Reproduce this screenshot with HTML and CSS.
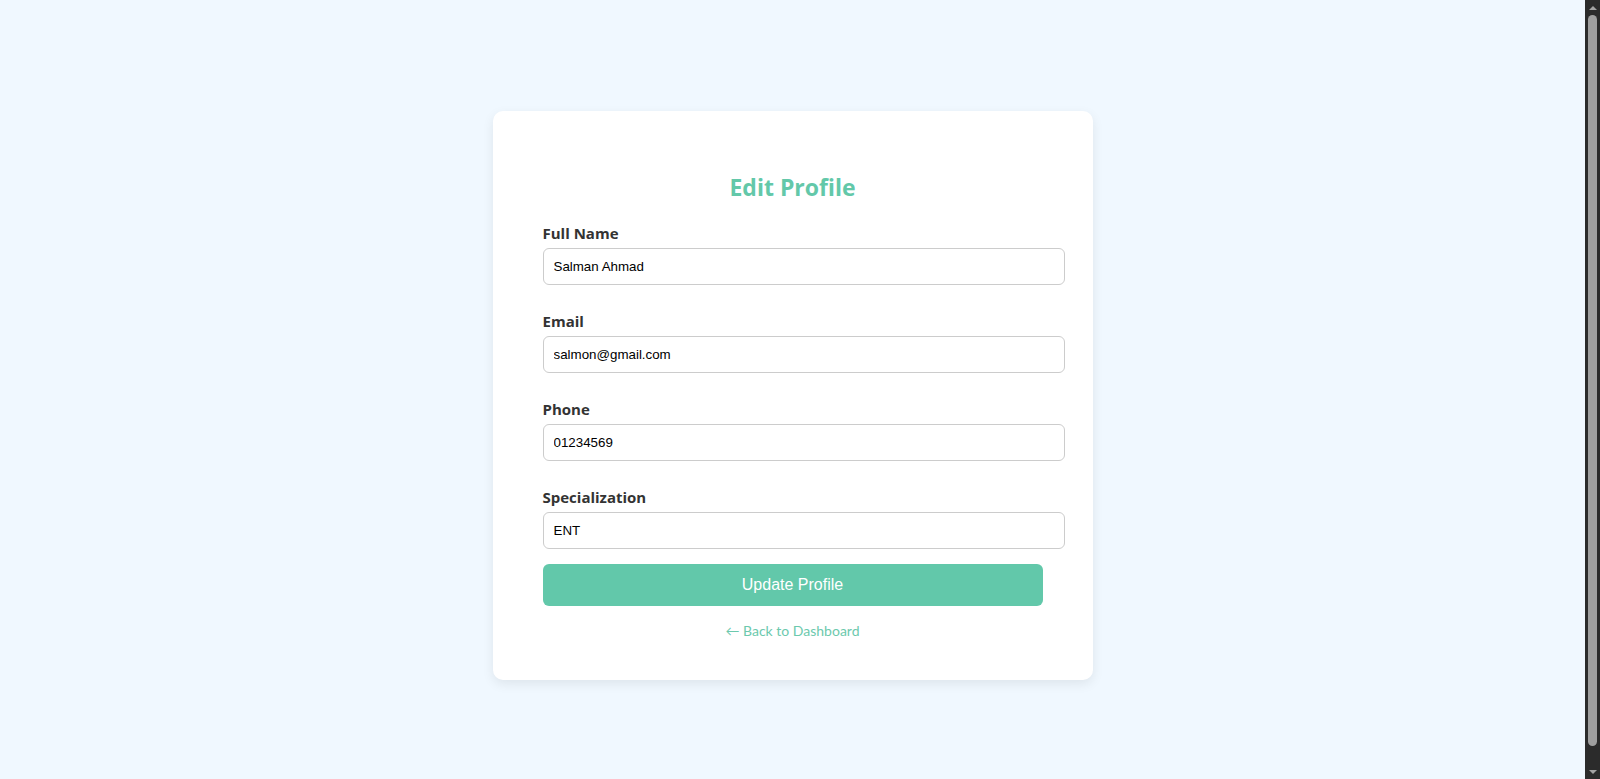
FILE: index.html
```html
<!DOCTYPE html>
<html lang="en">
<head>
<meta charset="utf-8">
<title>Edit Profile</title>
<link rel="stylesheet" href="styles.css">
</head>
<body>
<main class="page">
  <div class="card">
    <h2 class="title">Edit Profile</h2>
    <form class="form">
      <div class="field">
        <label class="label" for="name">Full Name</label>
        <input class="input" id="name" type="text" value="Salman Ahmad">
      </div>
      <div class="field">
        <label class="label" for="email">Email</label>
        <input class="input" id="email" type="email" value="salmon@gmail.com">
      </div>
      <div class="field">
        <label class="label" for="phone">Phone</label>
        <input class="input" id="phone" type="text" value="01234569">
      </div>
      <div class="field">
        <label class="label" for="spec">Specialization</label>
        <input class="input" id="spec" type="text" value="ENT">
      </div>
      <button class="btn" type="button">Update Profile</button>
    </form>
    <div class="back"><a class="back-link" href="#">&larr; Back to Dashboard</a></div>
  </div>
</main>
<div class="scrollbar" aria-hidden="true">
  <div class="sb-btn"><span class="arrow-up"></span></div>
  <div class="sb-track"><div class="sb-thumb"></div></div>
  <div class="sb-btn"><span class="arrow-down"></span></div>
</div>
</body>
</html>
```

FILE: styles.css
```css
html {
  background: #f0f8ff;
}

body {
  margin: 0;
  height: 100vh;
  overflow: hidden;
  display: flex;
  font-family: Lato, "Segoe UI", "Liberation Sans", sans-serif;
}

.page {
  flex: 1;
  display: flex;
  align-items: flex-start;
  justify-content: center;
  padding-top: 111px;
}

.card {
  width: 500px;
  padding: 40px 50px 39px;
  background: #ffffff;
  border-radius: 10px;
  box-shadow: 0 4px 12px rgba(0, 0, 0, 0.08);
}

.title {
  margin: 20px 0;
  font-family: "Open Sans", Lato, sans-serif;
  font-size: 23px;
  line-height: 32px;
  font-weight: 700;
  color: #63c8a9;
  text-align: center;
}

.form {
  margin: 0;
}

.field {
  margin-bottom: 26px;
}

.field:last-of-type {
  margin-bottom: 15px;
}

.label {
  display: block;
  margin-bottom: 4px;
  font-family: "Open Sans", Lato, sans-serif;
  font-size: 15px;
  line-height: 21px;
  font-weight: 700;
  color: #333333;
}

.input {
  display: block;
  width: 100%;
  margin: 0;
  padding: 10px;
  border: 1px solid #cccccc;
  border-radius: 6px;
  font-family: "Liberation Sans", Arial, sans-serif;
  font-size: 13.333px;
  line-height: 15px;
  color: #000000;
  background: #ffffff;
  outline: none;
}

.btn {
  display: block;
  width: 100%;
  height: 42px;
  margin: 0;
  padding: 0;
  border: none;
  border-radius: 6px;
  background: #62c8aa;
  color: #ffffff;
  font-family: "Liberation Sans", Arial, sans-serif;
  font-size: 16px;
  cursor: pointer;
}

.back {
  margin-top: 14px;
  text-align: center;
  line-height: 20px;
}

.back-link {
  font-size: 14px;
  color: #6cc9ad;
  text-decoration: none;
}

.scrollbar {
  width: 15px;
  flex: 0 0 15px;
  display: flex;
  flex-direction: column;
  background: #2b2b2b;
}

.sb-btn {
  height: 15px;
  flex: 0 0 15px;
  display: flex;
  align-items: center;
  justify-content: center;
}

.arrow-up {
  width: 0;
  height: 0;
  border-left: 4px solid transparent;
  border-right: 4px solid transparent;
  border-bottom: 4px solid #a3a3a3;
}

.arrow-down {
  width: 0;
  height: 0;
  border-left: 4px solid transparent;
  border-right: 4px solid transparent;
  border-top: 4px solid #a3a3a3;
}

.sb-track {
  flex: 1;
  padding: 0 3px;
}

.sb-thumb {
  height: 731px;
  background: #9f9f9f;
  border-radius: 5px;
}
```
